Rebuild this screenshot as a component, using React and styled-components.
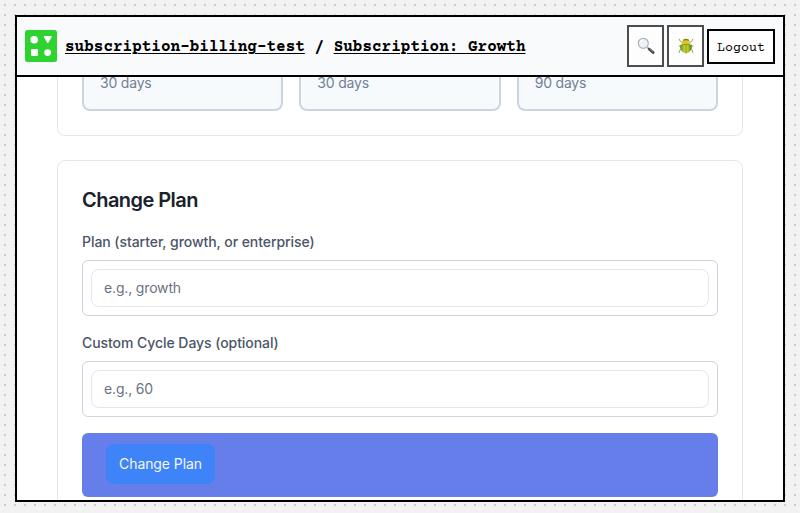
import React from "react";
import styled, { createGlobalStyle } from "styled-components";

const GlobalStyle = createGlobalStyle`
  *, *::before, *::after { box-sizing: border-box; }
  body {
    margin: 0;
    overflow: hidden;
    font-family: Inter, sans-serif;
  }
`;

const Desktop = styled.main`
  height: 513px;
  padding: 15px 15px 11px;
  background-color: #f2f2f2;
  background-image: linear-gradient(90deg, #f2f2f2 4px, transparent 4px 6px, #f2f2f2 6px),
    linear-gradient(#f2f2f2 4px, #cccccc 4px 6px, #f2f2f2 6px);
  background-size: 10px 10px;
`;

const Window = styled.div`
  height: 487px;
  display: flex;
  flex-direction: column;
  border: 2px solid #000;
  background: #fff;
  overflow: hidden;
`;

const Header = styled.header`
  flex: 0 0 60px;
  display: flex;
  align-items: center;
  padding: 0 8px;
  border-bottom: 2px solid #000;
  background: #f9fafc;
`;

const Logo = styled.svg`
  width: 32px;
  height: 32px;
  flex: none;
  margin-right: 8px;
`;

const Breadcrumb = styled.nav`
  flex: 1;
  padding-top: 2px;
  white-space: pre;
  color: #000;
  font: bold 16px/20px "Courier Prime", "Liberation Mono", monospace;
`;

const Crumb = styled.a`
  text-decoration: underline;
  text-decoration-thickness: 1px;
  text-underline-offset: 2px;
`;

const Actions = styled.div`
  display: flex;
  align-items: center;
  gap: 3px;
`;

const IconButton = styled.button`
  display: flex;
  align-items: center;
  justify-content: center;
  width: 37px;
  height: 42px;
  padding: 0;
  border: 2px solid #4c4c4c;
  background: #fdfdfe;
`;

const Glyph = styled.svg`
  width: 18px;
  height: 18px;
`;

const LogoutButton = styled.button`
  width: 68px;
  height: 35px;
  padding: 4px 0 0;
  border: 2px solid #000;
  background: #fff;
  color: #000;
  font: 13.333px "Courier Prime", "Liberation Mono", monospace;
`;

const Content = styled.div`
  flex: 1;
  min-height: 0;
  display: flex;
  flex-direction: column;
  gap: 24px;
  padding: 0 40px;
  overflow: hidden;
`;

const Card = styled.section`
  flex: none;
  padding: 24px;
  border: 1px solid #e2e8f0;
  border-radius: 8px;
  background: #fff;
`;

const PlansCard = styled(Card)`
  height: 59px;
  padding-top: 0;
  border-top: 0;
  border-radius: 0 0 8px 8px;
`;

const PlanGrid = styled.div`
  display: grid;
  grid-template-columns: repeat(3, 1fr);
  gap: 16px;
`;

const PlanTile = styled.div`
  height: 34px;
  padding: 0 16px;
  border: 2px solid #cbd5e0;
  border-top: 0;
  border-radius: 0 0 8px 8px;
  background: #f7fafc;
  color: #718096;
  font-size: 14px;
  line-height: 12px;
  letter-spacing: -0.2px;
`;

const FormCard = styled(Card)`
  height: 400px;
`;

const Title = styled.h2`
  margin: 2px 0 18px;
  color: #1a202c;
  font-size: 20px;
  line-height: 26px;
  font-weight: 600;
  letter-spacing: -0.55px;
`;

const Field = styled.div`
  margin-bottom: 16px;
`;

const Label = styled.label`
  display: block;
  margin-bottom: 8px;
  color: #4a5568;
  font-size: 14px;
  font-weight: 500;
  line-height: 21px;
  letter-spacing: -0.06px;
`;

const InputFrame = styled.div`
  height: 56px;
  padding: 8px;
  border: 1px solid #cbd5e0;
  border-radius: 6px;
`;

const Input = styled.input`
  display: block;
  width: 100%;
  height: 38px;
  padding: 0 12px 2px;
  border: 1px solid #e5e7eb;
  border-radius: 8px;
  background: #fff;
  font: 14px/20px Inter, sans-serif;
  letter-spacing: -0.16px;
  &::placeholder { color: #6b7280; opacity: 1; }
`;

const SubmitBar = styled.div`
  height: 64px;
  padding: 11px 24px;
  border-radius: 6px;
  background: #667eea;
`;

const SubmitButton = styled.button`
  display: block;
  width: 109px;
  height: 40px;
  padding: 0;
  border: 0;
  border-radius: 8px;
  background: #3f83f8;
  color: #f4f7ff;
  font: 14px/20px Inter, sans-serif;
  letter-spacing: -0.08px;
`;

const SearchIcon = () => (
  <Glyph viewBox="0 0 18 18">
    <path d="M10.5 10.5 L12.5 12.4" stroke="#73787b" strokeWidth="1.4" />
    <path d="M12.4 12.2 L16.1 15.5" stroke="#484b4d" strokeWidth="2.8" strokeLinecap="round" />
    <path d="M12.8 11.9 L15.9 14.6" stroke="#93979a" strokeWidth="0.7" />
    <circle cx="6.3" cy="6.3" r="5" fill="#eef1f6" stroke="#a9b1b8" strokeWidth="1.2" />
    <path d="M3.2 6 A3.3 3.3 0 0 1 6.2 3" fill="none" stroke="#fff" strokeWidth="1.2" />
  </Glyph>
);

const BugIcon = () => (
  <Glyph viewBox="0 0 18 18">
    <defs>
      <linearGradient id="shell">
        <stop offset="0" stopColor="#4b941b" />
        <stop offset="0.4" stopColor="#d1d12d" />
        <stop offset="0.65" stopColor="#bdca2a" />
        <stop offset="1" stopColor="#397f18" />
      </linearGradient>
    </defs>
    <g fill="none" stroke="#899873" strokeWidth="0.9">
      <path d="M6 6 L3.3 4.4 2 1.8M12 6 L14.7 4.4 16 1.8M5 9 L1.5 9M13 9 L16.5 9M5 11.5 L3 13 2 16M13 11.5 L15 13 16 16" />
    </g>
    <ellipse cx="9" cy="4" rx="3.2" ry="2.2" fill="#73872a" />
    <ellipse cx="9" cy="6.1" rx="4.4" ry="2.9" fill="#e7c51c" />
    <path d="M3.3 8.2 Q9 6.4 14.7 8.2 Q16 14 9 16.6 Q2 14 3.3 8.2Z" fill="url(#shell)" />
    <path d="M3.3 8.2 Q9 6.4 14.7 8.2M9 7.4V16.3" fill="none" stroke="#587e20" strokeWidth="0.6" />
  </Glyph>
);

export default function App() {
  return (
    <>
      <GlobalStyle />
      <Desktop>
        <Window>
          <Header>
            <Logo viewBox="0 0 32 32">
              <rect width="32" height="32" rx="2.5" fill="#2fd32f" />
              <g fill="#fff">
                <circle cx="9.2" cy="9.7" r="3.8" />
                <path d="M19.4 6 H26.1 Q27.3 6 26.7 7.1 L23.5 12.5 Q22.8 13.5 22.1 12.5 L18.9 7.1 Q18.3 6 19.4 6Z" />
                <rect x="6" y="19" width="7" height="7" rx="1.3" />
                <circle cx="22.6" cy="22.6" r="3.4" />
              </g>
            </Logo>
            <Breadcrumb>
              <Crumb>subscription-billing-test</Crumb> / <Crumb>Subscription: Growth</Crumb>
            </Breadcrumb>
            <Actions>
              <IconButton aria-label="Search"><SearchIcon /></IconButton>
              <IconButton aria-label="Debug"><BugIcon /></IconButton>
              <LogoutButton>Logout</LogoutButton>
            </Actions>
          </Header>
          <Content>
            <PlansCard>
              <PlanGrid>
                <PlanTile>30 days</PlanTile>
                <PlanTile>30 days</PlanTile>
                <PlanTile>90 days</PlanTile>
              </PlanGrid>
            </PlansCard>
            <FormCard>
              <Title>Change Plan</Title>
              <Field>
                <Label htmlFor="plan">Plan (starter, growth, or enterprise)</Label>
                <InputFrame><Input id="plan" placeholder="e.g., growth" /></InputFrame>
              </Field>
              <Field>
                <Label htmlFor="cycle">Custom Cycle Days (optional)</Label>
                <InputFrame><Input id="cycle" placeholder="e.g., 60" /></InputFrame>
              </Field>
              <SubmitBar><SubmitButton>Change Plan</SubmitButton></SubmitBar>
            </FormCard>
          </Content>
        </Window>
      </Desktop>
    </>
  );
}
